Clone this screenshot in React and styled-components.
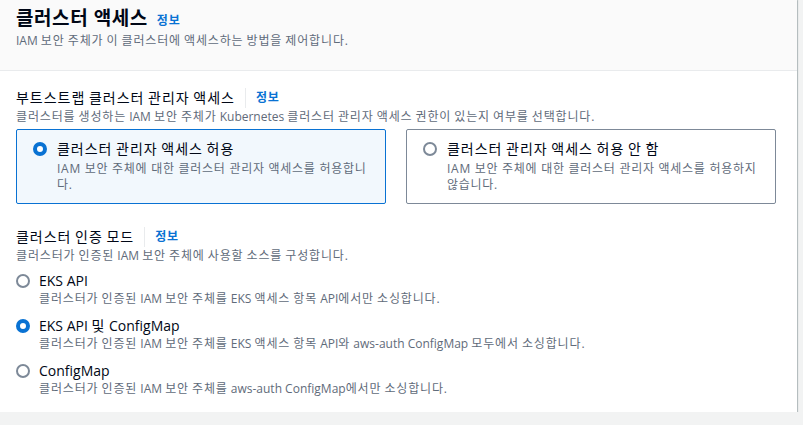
import React from "react";
import styled, { createGlobalStyle } from "styled-components";

const Global = createGlobalStyle`
  html, body { margin: 0; padding: 0; background: #f2f3f3; }
  body { font-family: "Open Sans", "Noto Sans CJK KR", sans-serif; color: #000716; }
`;

/* Hangul runs are set a little wider than the fallback CJK font draws them */
const HangulRun = styled.span`
  letter-spacing: 0.07em;
`;

const HANGUL = /([\u1100-\u11FF\u3131-\u318E\uAC00-\uD7A3]+)/;

function KText({ children }) {
  const parts = String(children).split(HANGUL);
  return parts.map((part, i) =>
    i % 2 === 1 ? <HangulRun key={i}>{part}</HangulRun> : part
  );
}

const Card = styled.section`
  width: 797px;
  background: #ffffff;
  box-shadow: 0 1px 1px 0 rgba(0, 28, 36, 0.35), 1px 0 1px 0 rgba(0, 28, 36, 0.2);
`;

const Header = styled.header`
  background: #fafafa;
  padding: 7px 16px 21px;
  border-bottom: 1px solid #e9ebed;
  display: flex;
  flex-direction: column;
  gap: 4px;
`;

const TitleRow = styled.div`
  display: flex;
  align-items: baseline;
  gap: 9px;
`;

const Title = styled.h2`
  margin: 0;
  font-size: 19px;
  line-height: 22px;
  font-weight: 700;
  letter-spacing: 0.03em;
  color: #000716;
`;

const InfoLink = styled.a`
  font-size: 12px;
  line-height: 16px;
  font-weight: 700;
  color: #0972d3;
  text-decoration: none;
`;

const Desc = styled.p`
  margin: 0;
  font-size: 12px;
  line-height: 16px;
  color: #5f6b7a;
  letter-spacing: ${(p) => (p.$spaced ? "0.06em" : "normal")};
`;

const Body = styled.div`
  padding: 17px 21px 15px 16px;
  display: flex;
  flex-direction: column;
  gap: 23px;
`;

const Field = styled.div`
  display: flex;
  flex-direction: column;
`;

const LabelRow = styled.div`
  display: flex;
  align-items: center;
  height: 20px;
`;

const Label = styled.span`
  font-size: 14px;
  line-height: 20px;
  color: #000716;
`;

const Divider = styled.span`
  width: 1px;
  height: 20px;
  background: #e9ebed;
  margin: 0 10px 0 10px;
`;

const FieldDesc = styled(Desc)`
  margin-top: 1px;
`;

const Tiles = styled.div`
  margin-top: 4px;
  display: grid;
  grid-template-columns: 370px 370px;
  gap: 20px;
`;

const Tile = styled.label`
  box-sizing: border-box;
  height: 75px;
  border: 1px solid ${(p) => (p.$checked ? "#0972d3" : "#7d8998")};
  background: ${(p) => (p.$checked ? "#f2f8fd" : "#ffffff")};
  border-radius: 2px;
  padding: 9px 12px 8px 16px;
  display: flex;
  gap: 10px;
`;

const Radio = styled.span`
  flex: none;
  box-sizing: border-box;
  width: 14px;
  height: 14px;
  margin-top: 3px;
  border-radius: 50%;
  border: ${(p) => (p.$checked ? "4px solid #0972d3" : "2px solid #7d8998")};
  background: #ffffff;
`;

const OptionText = styled.div`
  display: flex;
  flex-direction: column;
  gap: 2px;
`;

const RadioList = styled.div`
  margin-top: 7px;
  display: flex;
  flex-direction: column;
  gap: 9px;
`;

const RadioItem = styled.label`
  display: flex;
  gap: 9px;
`;

const ItemText = styled.div`
  display: flex;
  flex-direction: column;
`;

const tiles = [
  {
    label: "클러스터 관리자 액세스 허용",
    desc: "IAM 보안 주체에 대한 클러스터 관리자 액세스를 허용합니다.",
    checked: true,
  },
  {
    label: "클러스터 관리자 액세스 허용 안 함",
    desc: "IAM 보안 주체에 대한 클러스터 관리자 액세스를 허용하지 않습니다.",
    checked: false,
  },
];

const modes = [
  {
    label: "EKS API",
    desc: "클러스터가 인증된 IAM 보안 주체를 EKS 액세스 항목 API에서만 소싱합니다.",
    checked: false,
  },
  {
    label: "EKS API 및 ConfigMap",
    desc: "클러스터가 인증된 IAM 보안 주체를 EKS 액세스 항목 API와 aws-auth ConfigMap 모두에서 소싱합니다.",
    checked: true,
  },
  {
    label: "ConfigMap",
    desc: "클러스터가 인증된 IAM 보안 주체를 aws-auth ConfigMap에서만 소싱합니다.",
    checked: false,
  },
];

export default function App() {
  return (
    <>
      <Global />
      <Card>
        <Header>
          <TitleRow>
            <Title>클러스터 액세스</Title>
            <InfoLink>
              <KText>정보</KText>
            </InfoLink>
          </TitleRow>
          <Desc>
            <KText>IAM 보안 주체가 이 클러스터에 액세스하는 방법을 제어합니다.</KText>
          </Desc>
        </Header>
        <Body>
          <Field>
            <LabelRow>
              <Label>
                <KText>부트스트랩 클러스터 관리자 액세스</KText>
              </Label>
              <Divider />
              <InfoLink>
                <KText>정보</KText>
              </InfoLink>
            </LabelRow>
            <FieldDesc>
              <KText>
                클러스터를 생성하는 IAM 보안 주체가 Kubernetes 클러스터 관리자 액세스 권한이 있는지 여부를 선택합니다.
              </KText>
            </FieldDesc>
            <Tiles>
              {tiles.map((t) => (
                <Tile key={t.label} $checked={t.checked}>
                  <Radio $checked={t.checked} />
                  <OptionText>
                    <Label>
                      <KText>{t.label}</KText>
                    </Label>
                    <Desc $spaced>{t.desc}</Desc>
                  </OptionText>
                </Tile>
              ))}
            </Tiles>
          </Field>
          <Field>
            <LabelRow>
              <Label>
                <KText>클러스터 인증 모드</KText>
              </Label>
              <Divider />
              <InfoLink>
                <KText>정보</KText>
              </InfoLink>
            </LabelRow>
            <FieldDesc>
              <KText>클러스터가 인증된 IAM 보안 주체에 사용할 소스를 구성합니다.</KText>
            </FieldDesc>
            <RadioList>
              {modes.map((m) => (
                <RadioItem key={m.label}>
                  <Radio $checked={m.checked} />
                  <ItemText>
                    <Label>
                      <KText>{m.label}</KText>
                    </Label>
                    <Desc>
                      <KText>{m.desc}</KText>
                    </Desc>
                  </ItemText>
                </RadioItem>
              ))}
            </RadioList>
          </Field>
        </Body>
      </Card>
    </>
  );
}
